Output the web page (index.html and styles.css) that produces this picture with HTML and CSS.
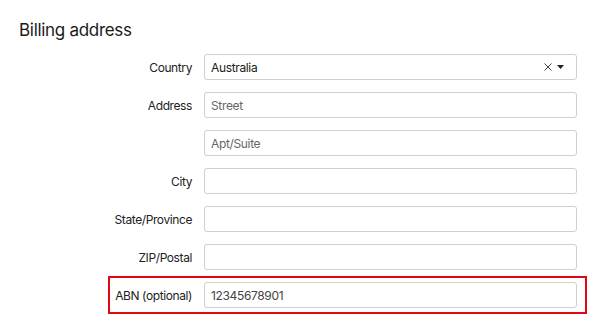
FILE: index.html
```html
<!DOCTYPE html>
<html>
<head>
<meta charset="utf-8">
<link rel="stylesheet" href="styles.css">
</head>
<body>
<div class="page">
  <h2 class="title">Billing address</h2>
  <div class="form">
    <div class="row">
      <label class="label">Country</label>
      <div class="field select">
        <span class="value">Australia</span>
        <span class="controls">
          <svg class="clear" width="8" height="8" viewBox="0 0 8 8"><path d="M0.5 0.5L7.5 7.5M7.5 0.5L0.5 7.5" stroke="#444" stroke-width="1" fill="none"/></svg>
          <svg class="caret" width="7" height="4" viewBox="0 0 7 4"><path d="M0 0H7L3.5 4Z" fill="#222"/></svg>
        </span>
      </div>
    </div>
    <div class="row">
      <label class="label">Address</label>
      <div class="field"><span class="placeholder">Street</span></div>
    </div>
    <div class="row">
      <label class="label"></label>
      <div class="field"><span class="placeholder">Apt/Suite</span></div>
    </div>
    <div class="row">
      <label class="label">City</label>
      <div class="field"></div>
    </div>
    <div class="row">
      <label class="label">State/Province</label>
      <div class="field"></div>
    </div>
    <div class="row">
      <label class="label">ZIP/Postal</label>
      <div class="field"></div>
    </div>
    <div class="row highlight">
      <label class="label">ABN (optional)</label>
      <div class="field"><span class="entered">12345678901</span></div>
    </div>
  </div>
</div>
</body>
</html>
```

FILE: styles.css
```css
* { box-sizing: border-box; }
html, body { margin: 0; padding: 0; background: #fff; }
body {
  font-family: Inter, "Noto Sans", "Liberation Sans", sans-serif;
  color: #222;
}
.page {
  padding-top: 18px;
}
.title {
  margin: 0 0 6px 19px;
  font-size: 17px;
  letter-spacing: -0.3px;
  font-weight: 400;
  line-height: 24px;
  color: #1a1a1a;
}
.form {
  display: flex;
  flex-direction: column;
  margin-left: 108px;
  width: 479px;
}
.row {
  display: grid;
  grid-template-columns: 1fr 373px;
  column-gap: 12px;
  align-items: center;
  padding: 4px 8px 4px 0;
  border: 2px solid transparent;
}
.row.highlight {
  border-color: #e30613;
}
.label {
  text-align: right;
  white-space: nowrap;
  font-size: 12px;
  letter-spacing: -0.4px;
  color: #222;
}
.field {
  height: 26px;
  border: 1px solid #cfcfcf;
  border-radius: 3px;
  display: flex;
  align-items: center;
  padding: 0 7px 0 6px;
  font-size: 12px;
  letter-spacing: -0.35px;
  background: #fff;
}
.value { color: #1a1a1a; flex: 1; }
.placeholder { color: #666; }
.entered { color: #444; }
.controls {
  display: flex;
  align-items: center;
  gap: 5px;
  margin-right: 5px;
}
.clear { display: block; }
.caret { display: block; }
```
